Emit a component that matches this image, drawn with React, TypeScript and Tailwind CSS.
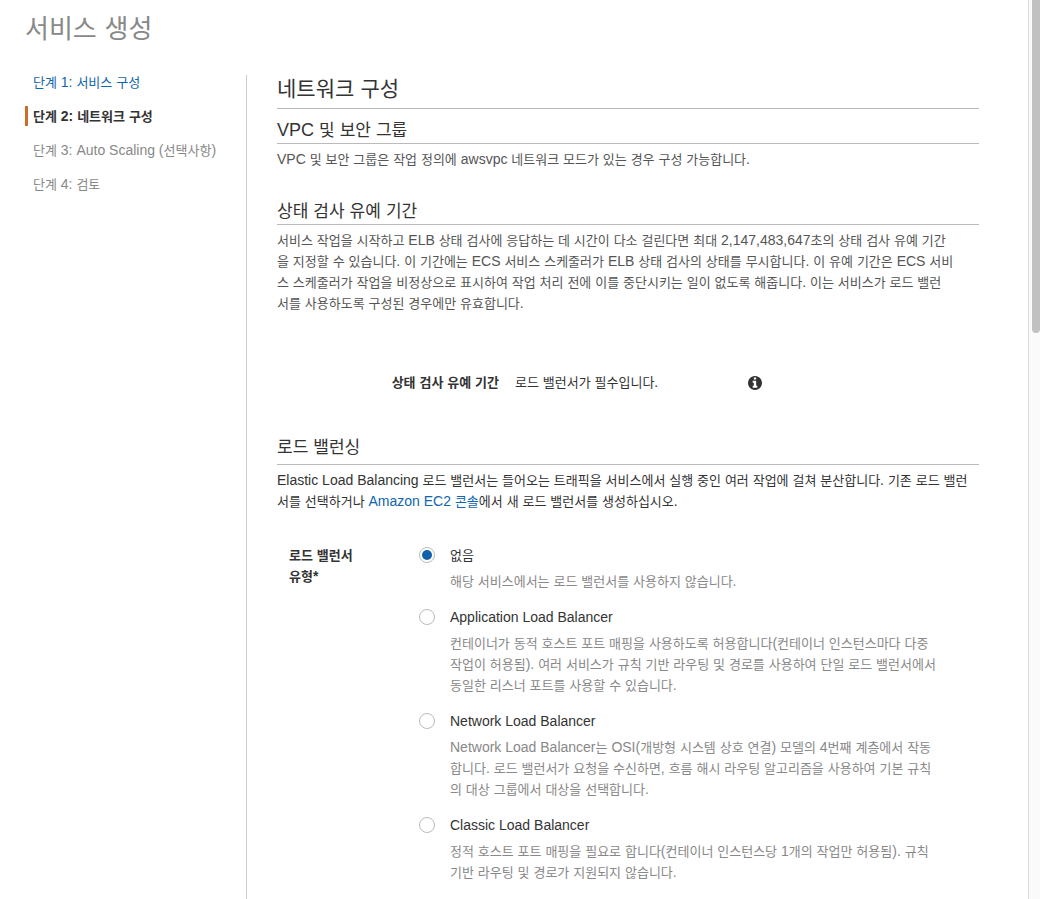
import { useState } from "react";
import type { ReactNode } from "react";

type Size = "body" | "h3" | "h2" | "h1";

const hangulSize: Record<Size, string> = {
  body: "text-[13px] leading-none",
  h3: "text-[17px] leading-none",
  h2: "text-[21px] leading-none",
  h1: "text-[26px] leading-none",
};

/** Sets Hangul runs slightly smaller than the Latin text around them. */
function Ko({ children, size = "body" }: { children: string; size?: Size }) {
  return (
    <>
      {children.split(/([가-힣]+)/).map((part, i) =>
        i % 2 === 1 ? (
          <span key={i} className={hangulSize[size]}>
            {part}
          </span>
        ) : (
          part
        ),
      )}
    </>
  );
}

function Lines({ lines }: { lines: string[] }) {
  return (
    <>
      {lines.map((line, i) => (
        <span key={line}>
          {i > 0 && <br />}
          <Ko>{line}</Ko>
        </span>
      ))}
    </>
  );
}

function InfoIcon() {
  return (
    <svg viewBox="0 128 1536 1536" className="size-[14px]" fill="currentColor" aria-hidden="true">
      <path d="M1024 1376v-160q0-14-9-23t-23-9h-96v-512q0-14-9-23t-23-9h-320q-14 0-23 9t-9 23v160q0 14 9 23t23 9h96v320h-96q-14 0-23 9t-9 23v160q0 14 9 23t23 9h448q14 0 23-9t9-23zm-128-896v-160q0-14-9-23t-23-9h-192q-14 0-23 9t-9 23v160q0 14 9 23t23 9h192q14 0 23-9t9-23zm640 416q0 209-103 385.5t-279.5 279.5-385.5 103-385.5-103-279.5-279.5-103-385.5 103-385.5 279.5-279.5 385.5-103 385.5 103 279.5 279.5 103 385.5z" />
    </svg>
  );
}

function SectionTitle({ children, className }: { children: string; className: string }) {
  return (
    <h3 className={`border-b border-[#bbb] text-[18px] leading-6 text-[#333] ${className}`}>
      <Ko size="h3">{children}</Ko>
    </h3>
  );
}

const steps = [
  { label: "단계 1: 서비스 구성", state: "done" },
  { label: "단계 2: 네트워크 구성", state: "current" },
  { label: "단계 3: Auto Scaling (선택사항)", state: "next" },
  { label: "단계 4: 검토", state: "next" },
];

const stepStyle: Record<string, string> = {
  done: "border-transparent text-[#1166ae]",
  current: "border-[#cc6d2e] font-bold text-[#333]",
  next: "border-transparent text-[#888]",
};

const options = [
  {
    id: "none",
    title: "없음",
    lines: ["해당 서비스에서는 로드 밸런서를 사용하지 않습니다."],
  },
  {
    id: "alb",
    title: "Application Load Balancer",
    lines: [
      "컨테이너가 동적 호스트 포트 매핑을 사용하도록 허용합니다(컨테이너 인스턴스마다 다중",
      "작업이 허용됨). 여러 서비스가 규칙 기반 라우팅 및 경로를 사용하여 단일 로드 밸런서에서",
      "동일한 리스너 포트를 사용할 수 있습니다.",
    ],
  },
  {
    id: "nlb",
    title: "Network Load Balancer",
    lines: [
      "Network Load Balancer는 OSI(개방형 시스템 상호 연결) 모델의 4번째 계층에서 작동",
      "합니다. 로드 밸런서가 요청을 수신하면, 흐름 해시 라우팅 알고리즘을 사용하여 기본 규칙",
      "의 대상 그룹에서 대상을 선택합니다.",
    ],
  },
  {
    id: "clb",
    title: "Classic Load Balancer",
    lines: [
      "정적 호스트 포트 매핑을 필요로 합니다(컨테이너 인스턴스당 1개의 작업만 허용됨). 규칙",
      "기반 라우팅 및 경로가 지원되지 않습니다.",
    ],
  },
];

function Paragraph({ children, className }: { children: ReactNode; className: string }) {
  return <p className={`mt-[5px] leading-[21px] ${className}`}>{children}</p>;
}

export default function App() {
  const [selected, setSelected] = useState("none");

  return (
    <div className="flex min-h-screen bg-white font-['Liberation_Sans','Noto_Sans_CJK_KR',sans-serif] text-[14px] text-[#333]">
      <div className="flex min-w-0 flex-1 flex-col pr-[49px] pl-[25px]">
        <h1 className="pt-[9px] text-[28px] leading-10 text-[#888]">
          <Ko size="h1">서비스 생성</Ko>
        </h1>
        <div className="mt-[23px] flex flex-1">
          <nav className="w-[221px] shrink-0">
            <ol className="flex flex-col gap-[14px]">
              {steps.map((step) => (
                <li
                  key={step.label}
                  className={`border-l-3 pl-[5px] leading-5 ${stepStyle[step.state]}`}
                  aria-current={step.state === "current" ? "step" : undefined}
                >
                  {step.state === "done" ? (
                    <a href="#service">
                      <Ko>{step.label}</Ko>
                    </a>
                  ) : (
                    <Ko>{step.label}</Ko>
                  )}
                </li>
              ))}
            </ol>
          </nav>

          <main className="mt-[3px] min-w-0 flex-1 border-l border-[#ccc] pl-[30px]">
            <h2 className="border-b border-[#bbb] pb-[5px] text-[22px] leading-7">
              <Ko size="h2">네트워크 구성</Ko>
            </h2>

            <SectionTitle className="mt-[9px] pb-px">VPC 및 보안 그룹</SectionTitle>
            <Paragraph className="text-[#555]">
              <Ko>VPC 및 보안 그룹은 작업 정의에 awsvpc 네트워크 모드가 있는 경우 구성 가능합니다.</Ko>
            </Paragraph>

            <SectionTitle className="mt-[29px] pb-px">상태 검사 유예 기간</SectionTitle>
            <Paragraph className="text-[#555]">
              <Lines
                lines={[
                  "서비스 작업을 시작하고 ELB 상태 검사에 응답하는 데 시간이 다소 걸린다면 최대 2,147,483,647초의 상태 검사 유예 기간",
                  "을 지정할 수 있습니다. 이 기간에는 ECS 서비스 스케줄러가 ELB 상태 검사의 상태를 무시합니다. 이 유예 기간은 ECS 서비",
                  "스 스케줄러가 작업을 비정상으로 표시하여 작업 처리 전에 이를 중단시키는 일이 없도록 해줍니다. 이는 서비스가 로드 밸런",
                  "서를 사용하도록 구성된 경우에만 유효합니다.",
                ]}
              />
            </Paragraph>

            <dl className="mt-[58px] flex items-center leading-[21px]">
              <dt className="w-[222px] text-right font-bold">
                <Ko>상태 검사 유예 기간</Ko>
              </dt>
              <dd className="ml-4 w-[233px]">
                <Ko>로드 밸런서가 필수입니다.</Ko>
              </dd>
              <dd>
                <button type="button" aria-label="정보" className="block">
                  <InfoIcon />
                </button>
              </dd>
            </dl>

            <SectionTitle className="mt-[42px] pb-[5px]">로드 밸런싱</SectionTitle>
            <Paragraph className="text-[#333]">
              <Ko>Elastic Load Balancing 로드 밸런서는 들어오는 트래픽을 서비스에서 실행 중인 여러 작업에 걸쳐 분산합니다. 기존 로드 밸런</Ko>
              <br />
              <Ko>서를 선택하거나 </Ko>
              <a href="#ec2" className="text-[#1166ae]">
                <Ko>Amazon EC2 콘솔</Ko>
              </a>
              <Ko>에서 새 로드 밸런서를 생성하십시오.</Ko>
            </Paragraph>

            <div
              role="radiogroup"
              aria-labelledby="lb-type"
              className="mt-[33px] flex pl-3 leading-[21px]"
            >
              <div id="lb-type" className="w-[130px] shrink-0 font-bold">
                <Ko>로드 밸런서</Ko>
                <br />
                <Ko>유형*</Ko>
              </div>
              <div className="flex min-w-0 flex-1 flex-col gap-[15px]">
                {options.map((option) => (
                  <div key={option.id} className="flex gap-[15px]">
                    <input
                      type="radio"
                      name="lb"
                      id={option.id}
                      aria-describedby={`${option.id}-text`}
                      checked={selected === option.id}
                      onChange={() => setSelected(option.id)}
                      className="mt-[2px] size-4 shrink-0 appearance-none rounded-full border border-[#bbb] bg-white bg-clip-content p-[2px] checked:bg-[#1160aa]"
                    />
                    <div className="min-w-0">
                      <label htmlFor={option.id} className="block">
                        <Ko>{option.title}</Ko>
                      </label>
                      <p id={`${option.id}-text`} className="mt-[5px] text-[#888]">
                        <Lines lines={option.lines} />
                      </p>
                    </div>
                  </div>
                ))}
              </div>
            </div>
          </main>
        </div>
      </div>

      <div className="w-3 shrink-0 border-l border-[#ddd] bg-[#fafafa] pl-[3px]" aria-hidden="true">
        <div className="h-[333px] rounded-b-full bg-[#c1c1c1]" />
      </div>
    </div>
  );
}
